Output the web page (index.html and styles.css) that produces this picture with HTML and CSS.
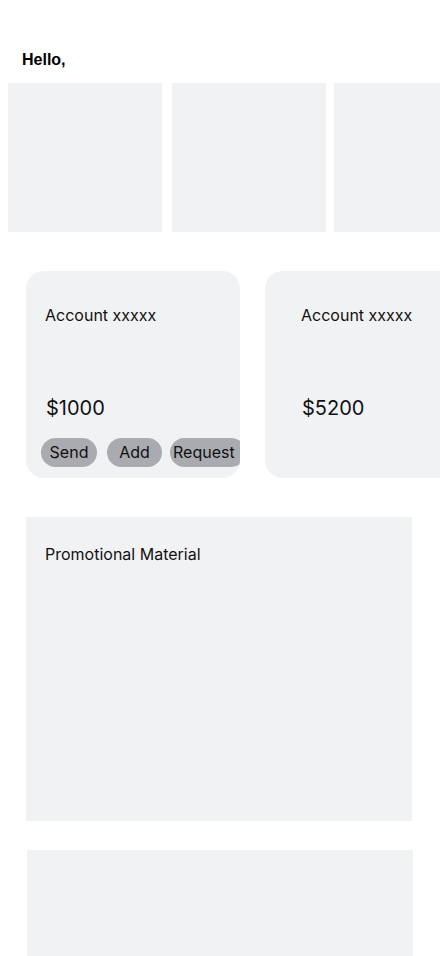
FILE: index.html
```html
<!DOCTYPE html>
<html lang="en">
<head>
<meta charset="utf-8">
<meta name="viewport" content="width=device-width, initial-scale=1">
<title>Home</title>
<link rel="stylesheet" href="styles.css">
</head>
<body>
<main class="page">
  <h1 class="greeting">Hello,</h1>
  <div class="tiles">
    <div class="tile tile-1"></div>
    <div class="tile tile-2"></div>
    <div class="tile tile-3"></div>
  </div>
  <div class="accounts">
    <section class="account account-1">
      <p class="account-name">Account xxxxx</p>
      <p class="account-balance">$1000</p>
      <div class="actions">
        <button class="action action-send">Send</button>
        <button class="action action-add">Add</button>
        <button class="action action-request">Request</button>
      </div>
    </section>
    <section class="account account-2">
      <p class="account-name">Account xxxxx</p>
      <p class="account-balance">$5200</p>
    </section>
  </div>
  <section class="promo">
    <p class="promo-title">Promotional Material</p>
  </section>
  <section class="bottom-box"></section>
</main>
</body>
</html>
```
FILE: styles.css
```css
* { box-sizing: border-box; }
html, body {
  margin: 0;
  padding: 0;
  background: #ffffff;
}
body {
  width: 440px;
  height: 956px;
  overflow: hidden;
  font-family: Inter, "Liberation Sans", sans-serif;
  color: #111111;
}
.page {
  padding-top: 50px;
}
.greeting {
  margin: 0 0 13px 22px;
  font-family: "Liberation Sans", Arial, sans-serif;
  font-weight: 700;
  font-size: 16px;
  line-height: 20px;
  color: #000;
}
.tiles {
  display: flex;
  padding-left: 8px;
  height: 149px;
  overflow: hidden;
}
.tile {
  flex: 0 0 154px;
  height: 149px;
  background: #f1f2f4;
}
.tile-2 { margin-left: 10px; }
.tile-3 { margin-left: 8px; }

.accounts {
  display: flex;
  gap: 25px;
  margin-top: 39px;
  padding-left: 26px;
  overflow: hidden;
}
.account {
  flex: 0 0 214px;
  height: 207px;
  border-radius: 18px;
  background: #f1f2f4;
  padding: 34px 0 0 19px;
  overflow: hidden;
  display: flex;
  flex-direction: column;
}
.account-2 { padding-left: 36px; }
.account-name {
  margin: 0;
  font-size: 16px;
  line-height: 20px;
}
.account-balance {
  margin: 71px 0 0 1px;
  font-size: 20px;
  line-height: 24px;
}
.actions {
  display: flex;
  margin-top: 18px;
  margin-left: -4px;
}
.action {
  flex: 0 0 auto;
  height: 29px;
  border: 0;
  border-radius: 15px;
  background: #a9abb0;
  color: #111111;
  font-family: Inter, "Liberation Sans", sans-serif;
  font-size: 16px;
  line-height: 29px;
  padding: 0;
  text-align: center;
}
.action-send { width: 56px; }
.action-add { width: 55px; margin-left: 10px; }
.action-request { width: 76px; margin-left: 8px; padding-left: 3px; text-align: left; }

.promo {
  margin: 39px 0 0 26px;
  width: 386px;
  height: 304px;
  background: #f1f2f4;
  padding: 27px 0 0 19px;
}
.promo-title {
  margin: 0;
  font-size: 16px;
  line-height: 20px;
}
.bottom-box {
  margin: 29px 0 0 27px;
  width: 386px;
  height: 106px;
  background: #f1f2f4;
}
```
